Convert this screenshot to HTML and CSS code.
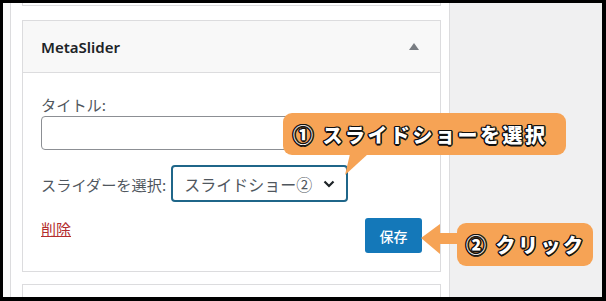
FILE: index.html
```html
<!DOCTYPE html>
<html lang="ja">
<head>
  <meta charset="UTF-8">
  <title>MetaSlider ウィジェット</title>
  <link rel="stylesheet" href="styles.css">
</head>
<body>
  <div class="frame">

    <!-- 左の余白 -->
    <div class="gutter"></div>

    <!-- ウィジェットエリア -->
    <div class="sidebar">
      <div class="widget-prev"></div>

      <div class="widget">
        <div class="widget-top">
          <span class="widget-title">MetaSlider</span>
          <span class="toggle"></span>
        </div>
        <div class="widget-inside">
          <label class="field-label" for="title">タイトル:</label>
          <input class="text-input" id="title" type="text">

          <div class="select-row">
            <label class="field-label" for="slider">スライダーを選択:</label>
            <div class="select-box" id="slider">
              <span>スライドショー②</span>
              <svg class="chevron" width="12" height="8" viewBox="0 0 12 8">
                <path d="M1.5 1.5 L6 6 L10.5 1.5" fill="none" stroke="#1d2327" stroke-width="2.2"/>
              </svg>
            </div>
          </div>

          <div class="actions">
            <a class="delete-link" href="#">削除</a>
            <button class="save-btn">保存</button>
          </div>
        </div>
      </div>

      <div class="widget-next"></div>
    </div>

    <!-- 右側の管理画面背景 -->
    <div class="admin-bg"></div>

    <!-- 吹き出し -->
    <div class="callout callout-one">① スライドショーを選択</div>
    <svg class="tail-one" width="26" height="22" viewBox="0 0 26 22">
      <polygon points="6,0 24,0 1,21" fill="#f6a355"/>
    </svg>

    <svg class="arrow-two" width="42" height="34" viewBox="0 0 42 34">
      <polygon points="1,15 20,1 20,10 42,10 42,21 20,21 20,31" fill="#f6a355"/>
    </svg>
    <div class="callout callout-two">② クリック</div>

  </div>
</body>
</html>
```

FILE: styles.css
```css
/* 全体 */
body {
  margin: 0;
  background: #000;
  font-family: "Noto Sans CJK JP", "Noto Sans", sans-serif;
  color: #50575e;
}
.frame {
  position: relative;
  display: flex;
  width: 599px;
  height: 294px;
  margin: 3px 0 0 3px;
  background: #f0f0f1;
  overflow: hidden;
}
.gutter {
  width: 7px;
  background: #fbfbfb;
}

/* ウィジェットエリア */
.sidebar {
  width: 419px;
  padding: 0 8px 0 11px;
  background: #fff;
  border-left: 1px solid #dcdcde;
  border-right: 1px solid #dcdcde;
}
.widget-prev {
  height: 2px;
  border: 1px solid #dcdcde;
  border-top: none;
}
.widget-next {
  height: 20px;
  margin-top: 12px;
  border: 1px solid #dcdcde;
  border-bottom: none;
}
.widget {
  margin-top: 14px;
  border: 1px solid #dcdcde;
}
.widget-top {
  display: flex;
  align-items: center;
  justify-content: space-between;
  height: 51px;
  padding: 0 21px 0 18px;
  background: #f8f8f8;
  border-bottom: 1px solid #dcdcde;
}
.widget-title {
  font-family: "Noto Sans", sans-serif;
  font-weight: 600;
  font-size: 15px;
  color: #1d2327;
}
.toggle {
  width: 0;
  height: 0;
  border-left: 5px solid transparent;
  border-right: 5px solid transparent;
  border-bottom: 7px solid #787c82;
}

.widget-inside {
  padding: 21px 18px 18px 18px;
}
.field-label {
  display: block;
  font-size: 15.2px;
  line-height: 20px;
}
.text-input {
  display: block;
  box-sizing: border-box;
  width: 100%;
  height: 34px;
  margin: 2px 0 0;
  border: 1px solid #8c8f94;
  border-radius: 4px;
}

.select-row {
  display: flex;
  align-items: center;
  gap: 5px;
  margin-top: 15px;
}
.select-box {
  display: flex;
  align-items: center;
  justify-content: space-between;
  box-sizing: border-box;
  width: 177px;
  height: 37px;
  padding: 0 11px 0 11px;
  border: 2px solid #1f6689;
  border-radius: 4px;
  font-size: 16px;
  color: #50575e;
}

.actions {
  display: flex;
  align-items: flex-start;
  justify-content: space-between;
  margin-top: 16px;
}
.delete-link {
  margin-top: 1px;
  font-size: 15px;
  line-height: 20px;
  color: #b32d2e;
}
.save-btn {
  width: 57px;
  height: 35px;
  padding: 0;
  border: none;
  border-radius: 3px;
  background: #1478b9;
  color: #fff;
  font-family: "Noto Sans CJK JP", sans-serif;
  font-weight: 500;
  font-size: 14px;
}

.admin-bg {
  flex: 1;
}

/* 吹き出し */
.callout {
  position: absolute;
  display: flex;
  align-items: center;
  box-sizing: border-box;
  background: #f6a355;
  border-radius: 9px;
  color: #fff;
  font-weight: 900;
  font-size: 20px;
  letter-spacing: 2.5px;
  white-space: nowrap;
  text-shadow:
    1.5px 0 0 #111, -1.5px 0 0 #111, 0 1.5px 0 #111, 0 -1.5px 0 #111,
    1px 1px 0 #111, -1px -1px 0 #111, 1px -1px 0 #111, -1px 1px 0 #111;
}
.callout-one {
  left: 280px;
  top: 110px;
  width: 283px;
  height: 42px;
  padding-left: 10px;
}
.tail-one {
  position: absolute;
  left: 341px;
  top: 151px;
}
.callout-two {
  left: 454px;
  top: 220px;
  width: 136px;
  height: 43px;
  padding-left: 9px;
}
.arrow-two {
  position: absolute;
  left: 417px;
  top: 220px;
}
```
